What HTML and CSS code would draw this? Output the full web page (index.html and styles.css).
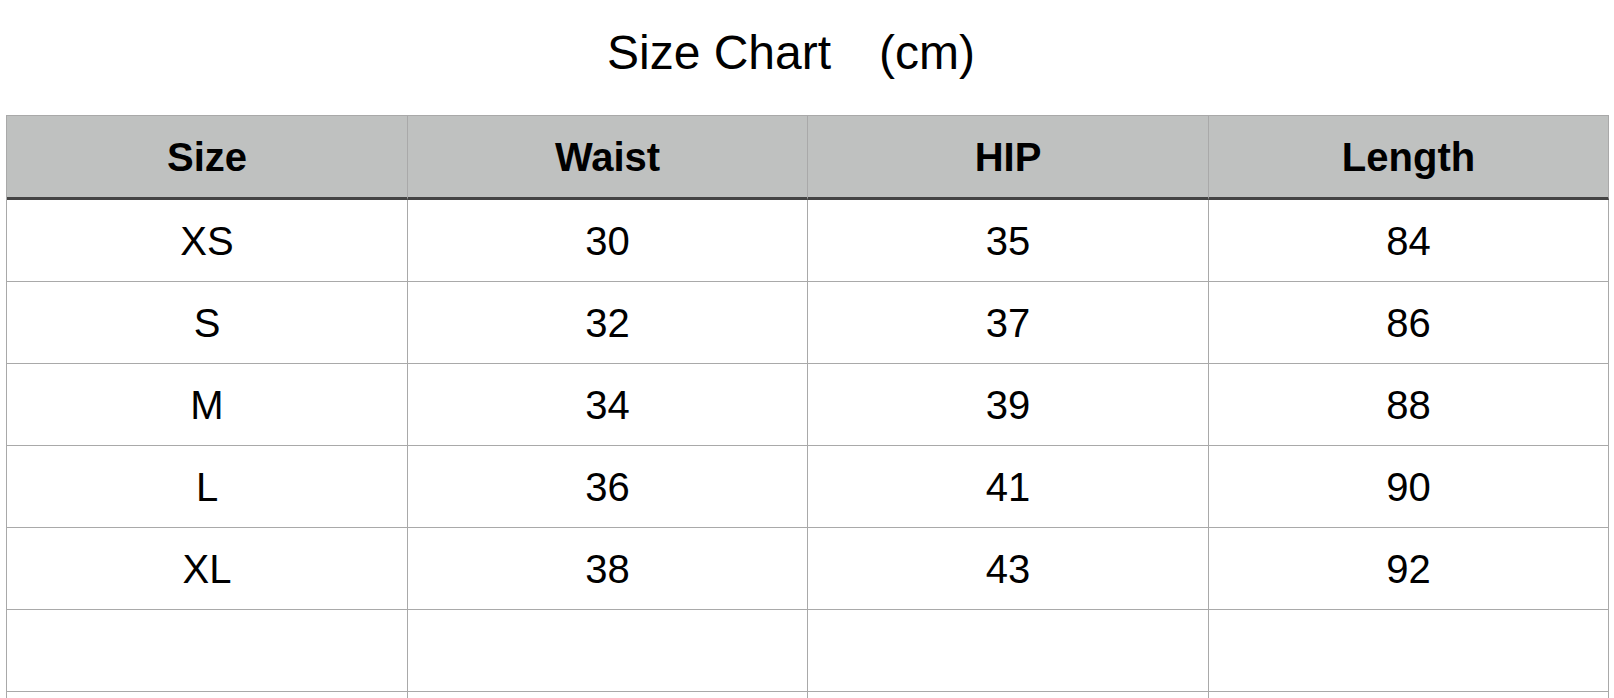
FILE: index.html
```html
<!DOCTYPE html>
<html lang="en">
<head>
<meta charset="utf-8">
<title>Size Chart</title>
<link rel="stylesheet" href="styles.css">
</head>
<body>
<div class="page">
  <h1 class="title">Size Chart　(cm)</h1>
  <table class="chart">
    <colgroup>
      <col class="c1"><col class="c2"><col class="c3"><col class="c4">
    </colgroup>
    <thead>
      <tr><th>Size</th><th>Waist</th><th>HIP</th><th>Length</th></tr>
    </thead>
    <tbody>
      <tr><td>XS</td><td>30</td><td>35</td><td>84</td></tr>
      <tr><td>S</td><td>32</td><td>37</td><td>86</td></tr>
      <tr><td>M</td><td>34</td><td>39</td><td>88</td></tr>
      <tr><td>L</td><td>36</td><td>41</td><td>90</td></tr>
      <tr><td>XL</td><td>38</td><td>43</td><td>92</td></tr>
      <tr><td></td><td></td><td></td><td></td></tr>
      <tr><td></td><td></td><td></td><td></td></tr>
    </tbody>
  </table>
</div>
</body>
</html>
```

FILE: styles.css
```css
html, body {
  margin: 0;
  padding: 0;
  background: #ffffff;
}

body {
  font-family: "Liberation Sans", Arial, "Noto Sans CJK SC", sans-serif;
  color: #000000;
  overflow: hidden;
}

.page {
  padding-left: 6px;
}

.title {
  margin: 0;
  padding: 25px 38px 34px 0;
  font-size: 48px;
  font-weight: 400;
  line-height: 56px;
  text-align: center;
  height: 56px;
}

.chart {
  border-collapse: separate;
  border-spacing: 0;
  table-layout: fixed;
  width: 1603px;
  border-left: 1px solid #a9a9a9;
  border-top: 1px solid #a9a9a9;
}

.c1 { width: 401px; }
.c2 { width: 400px; }
.c3 { width: 401px; }
.c4 { width: 400px; }

.chart th,
.chart td {
  padding: 0;
  text-align: center;
  vertical-align: middle;
  border-right: 1px solid #a9a9a9;
  border-bottom: 1px solid #a9a9a9;
  box-sizing: border-box;
  line-height: 46px;
}

.chart th {
  height: 84px;
  background: #bfc1c0;
  font-size: 40px;
  font-weight: 700;
  border-bottom: 3px solid #444444;
}

.chart td {
  height: 82px;
  font-size: 40px;
  font-weight: 400;
}
```
